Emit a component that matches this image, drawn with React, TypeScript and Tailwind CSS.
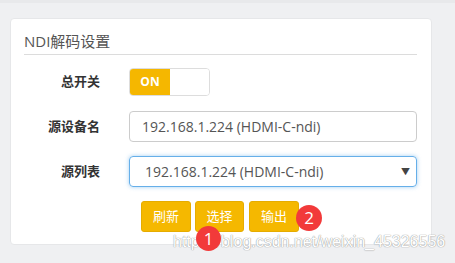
import React from 'react';

const font = { fontFamily: '"Open Sans", "Noto Sans CJK SC", sans-serif' };

export default function App() {
  return (
    <div
      className="relative w-[455px] h-[263px] overflow-hidden bg-[#eff0f2]"
      style={font}
    >
      <div className="h-[3px] bg-[#e8e9eb]" />
      <div className="ml-[10px] mt-[15px] w-[422px] h-[227px] rounded bg-white border border-[#e6e7e9] px-[13px] pt-[13px]">
        {/* Title */}
        <div className="w-[393px] border-b border-[#dcdcdc] pb-[3px] text-[15px] leading-[19px] text-[#555]">
          NDI解码设置
        </div>

        {/* Switch */}
        <div className="mt-[13px] flex items-center h-[28px]">
          <div className="w-[76px] text-right text-[13px] font-bold text-[#333]">总开关</div>
          <div className="ml-[29px] flex h-[28px] w-[81px] overflow-hidden rounded border border-[#ddd]">
            <div className="flex w-[40px] items-center justify-center bg-[#f5b700] text-[12px] font-bold text-white">
              ON
            </div>
            <div className="flex-1 bg-white" />
          </div>
        </div>

        {/* Device name */}
        <div className="mt-[15px] flex items-center">
          <div className="w-[76px] text-right text-[13px] font-bold text-[#333]">源设备名</div>
          <div className="ml-[29px] flex h-[31px] w-[288px] items-center rounded border border-[#ccc] px-[12px] text-[14px] text-[#555]">
            192.168.1.224 (HDMI-C-ndi)
          </div>
        </div>

        {/* Source list */}
        <div className="mt-[14px] flex items-center">
          <div className="w-[76px] text-right text-[13px] font-bold text-[#333]">源列表</div>
          <div className="ml-[29px] flex h-[31px] w-[288px] items-center justify-between rounded border border-[#66afe9] pl-[15px] pr-[6px] text-[14px] text-[#555] shadow-[0_0_4px_rgba(102,175,233,0.6)]">
            <span>192.168.1.224 (HDMI-C-ndi)</span>
            <span className="text-[9px] text-[#444]">▼</span>
          </div>
        </div>

        {/* Buttons */}
        <div className="mt-[14px] ml-[117px] flex gap-[4px]">
          <button className="h-[31px] w-[50px] rounded-[3px] border border-[#e6ac00] bg-[#f5b800] text-[13px] text-white">
            刷新
          </button>
          <button className="h-[31px] w-[49px] rounded-[3px] border border-[#e6ac00] bg-[#f5b800] text-[13px] text-white">
            选择
          </button>
          <button className="ml-[1px] h-[31px] w-[50px] rounded-[3px] border border-[#e6ac00] bg-[#f5b800] text-[13px] text-white">
            输出
          </button>
        </div>
      </div>

      {/* Watermark */}
      <div
        className="absolute left-[173px] top-[232px] text-[16px] leading-[19px] text-white [text-shadow:0_0_1px_#999,0_0_1px_#999]"
        style={{ fontFamily: '"Liberation Sans", sans-serif' }}
      >
        https://blog.csdn.net/weixin_45326556
      </div>

      {/* Badges */}
      <div className="absolute left-[196px] top-[226px] flex h-[25px] w-[25px] items-center justify-center rounded-full bg-[#f23a3a] text-[17px] text-white">
        1
      </div>
      <div className="absolute left-[296px] top-[205px] flex h-[26px] w-[26px] items-center justify-center rounded-full bg-[#f23a3a] text-[17px] text-white">
        2
      </div>
    </div>
  );
}
